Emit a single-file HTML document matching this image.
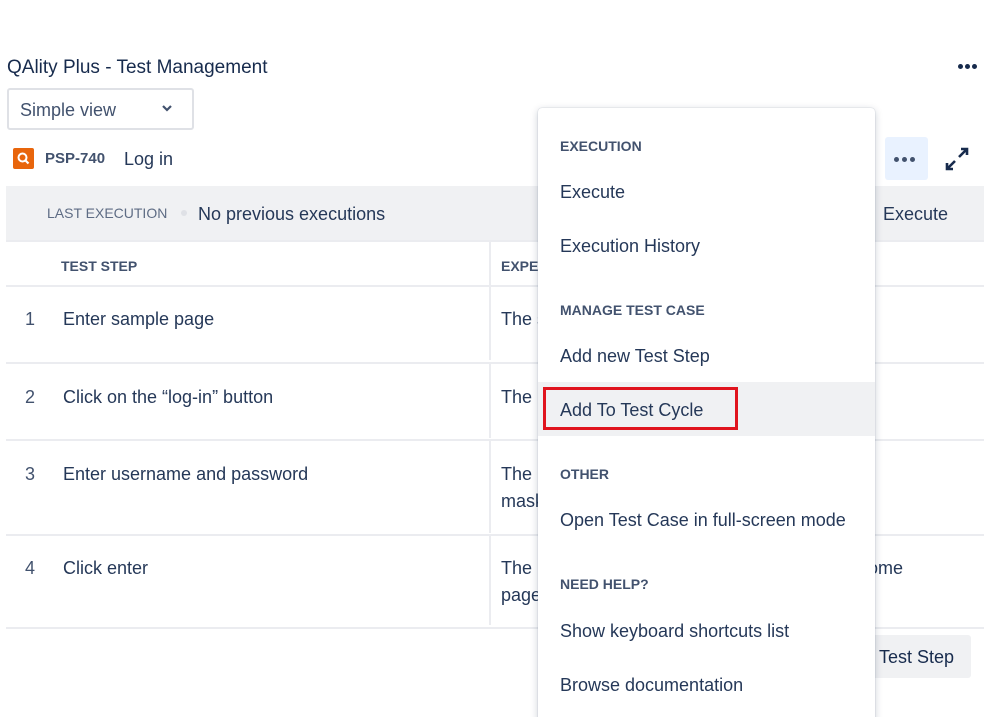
<!DOCTYPE html>
<html><head><style>
*{margin:0;padding:0;box-sizing:border-box}
html,body{width:999px;height:717px;overflow:hidden}
body{background:#fff;font-family:"Liberation Sans",sans-serif;color:#253858;position:relative}
.a{position:absolute;white-space:nowrap}
.t{font-size:18px}
.h{font-size:14px;font-weight:bold;color:#42526e}
.line{position:absolute;height:2px;background:#ebecf0}
.vl{position:absolute;width:2px;background:#ebecf0}
.d{position:absolute;width:5px;height:5px;border-radius:3px}
</style></head><body>
<div class="a" style="left:7px;top:57px;font-size:19px;color:#172b4d">QAlity Plus - Test Management</div>
<div class="d" style="left:958px;top:64px;background:#172b4d"></div><div class="d" style="left:965px;top:64px;background:#172b4d"></div><div class="d" style="left:972px;top:64px;background:#172b4d"></div>
<div class="a" style="left:7px;top:88px;width:187px;height:42px;border:2px solid #dfe1e6;border-radius:3px"></div>
<div class="a t" style="left:20px;top:100px;color:#42526e">Simple view</div>
<svg class="a" style="left:160px;top:102px" width="14" height="12"><path d="M3 4l4 4 4-4" stroke="#42526e" stroke-width="2.2" fill="none"/></svg>
<div class="a" style="left:13px;top:148px;width:21px;height:21px;background:#e8650c;border-radius:2px"></div>
<svg class="a" style="left:15px;top:150px" width="17" height="17"><circle cx="7.5" cy="7.5" r="4" stroke="#fff" stroke-width="2" fill="none"/><path d="M10.5 10.5l3 3" stroke="#fff" stroke-width="2.2"/></svg>
<div class="a" style="left:45px;top:150px;font-size:15px;font-weight:bold;color:#42526e">PSP-740</div>
<div class="a t" style="left:124px;top:149px">Log in</div>
<div class="a" style="left:885px;top:137px;width:43px;height:43px;background:#e9f2ff;border-radius:3px"></div>
<div class="d" style="left:894px;top:157px;background:#42526e"></div><div class="d" style="left:902px;top:157px;background:#42526e"></div><div class="d" style="left:910px;top:157px;background:#42526e"></div>
<svg class="a" style="left:944px;top:146px" width="26" height="26"><path d="M15 11l8-8M17 3h6v6M11 15l-8 8M3 17v6h6" stroke="#172b4d" stroke-width="2.6" fill="none"/></svg>
<div class="a" style="left:6px;top:186px;width:978px;height:54px;background:#f0f1f3"></div>
<div class="a" style="left:47px;top:205px;font-size:14px;color:#5e6c84">LAST EXECUTION</div>
<div class="a" style="left:181px;top:210px;width:6px;height:6px;border-radius:3px;background:#dfe1e6"></div>
<div class="a t" style="left:198px;top:204px">No previous executions</div>
<div class="a t" style="left:883px;top:204px">Execute</div>
<div class="line" style="left:6px;width:978px;top:240px"></div>
<div class="a h" style="left:61px;top:258px">TEST STEP</div>
<div class="a h" style="left:501px;top:258px">EXPECTED</div>
<div class="vl" style="left:489px;top:241px;height:44px"></div>
<div class="line" style="left:6px;width:978px;top:285px"></div>
<div class="vl" style="left:489px;top:287px;height:73px"></div>
<div class="a t" style="left:25px;top:309px;color:#42526e">1</div><div class="a t" style="left:63px;top:309px">Enter sample page</div><div class="a t" style="left:501px;top:309px">The s</div>
<div class="line" style="left:6px;width:978px;top:362px"></div>
<div class="vl" style="left:489px;top:364px;height:74px"></div>
<div class="a t" style="left:25px;top:387px;color:#42526e">2</div><div class="a t" style="left:63px;top:387px">Click on the “log-in” button</div><div class="a t" style="left:501px;top:387px">The l</div>
<div class="line" style="left:6px;width:978px;top:439px"></div>
<div class="vl" style="left:489px;top:441px;height:92px"></div>
<div class="a t" style="left:25px;top:464px;color:#42526e">3</div><div class="a t" style="left:63px;top:464px">Enter username and password</div><div class="a t" style="left:501px;line-height:27px;top:461px">The u<br>mask</div>
<div class="line" style="left:6px;width:978px;top:534px"></div>
<div class="vl" style="left:489px;top:536px;height:89px"></div>
<div class="a t" style="left:25px;top:558px;color:#42526e">4</div><div class="a t" style="left:63px;top:558px">Click enter</div><div class="a t" style="left:501px;top:555px;line-height:27px">The u<br>page</div>
<div class="a t" style="left:868px;top:558px">ome</div>
<div class="line" style="left:6px;width:978px;top:627px"></div>
<div class="a" style="left:860px;top:635px;width:111px;height:43px;background:#f0f1f3;border-radius:3px"></div>
<div class="a t" style="left:879px;top:647px;color:#172b4d">Test Step</div>
<div class="a" style="left:538px;top:108px;width:337px;height:640px;background:#fff;border-radius:4px;box-shadow:0 2px 8px rgba(9,30,66,.22),0 0 1px rgba(9,30,66,.3)"></div>
<div class="a" style="left:538px;top:382px;width:337px;height:54px;background:#f0f1f3"></div>
<div class="a" style="left:543px;top:387px;width:195px;height:43px;border:3px solid #e0141e"></div>
<div class="a h" style="left:560px;top:138px">EXECUTION</div>
<div class="a t" style="left:560px;top:182px">Execute</div>
<div class="a t" style="left:560px;top:236px">Execution History</div>
<div class="a h" style="left:560px;top:302px">MANAGE TEST CASE</div>
<div class="a t" style="left:560px;top:346px">Add new Test Step</div>
<div class="a t" style="left:560px;top:400px">Add To Test Cycle</div>
<div class="a h" style="left:560px;top:466px">OTHER</div>
<div class="a t" style="left:560px;top:510px">Open Test Case in full-screen mode</div>
<div class="a h" style="left:560px;top:576px">NEED HELP?</div>
<div class="a t" style="left:560px;top:621px">Show keyboard shortcuts list</div>
<div class="a t" style="left:560px;top:675px">Browse documentation</div>
</body></html>
